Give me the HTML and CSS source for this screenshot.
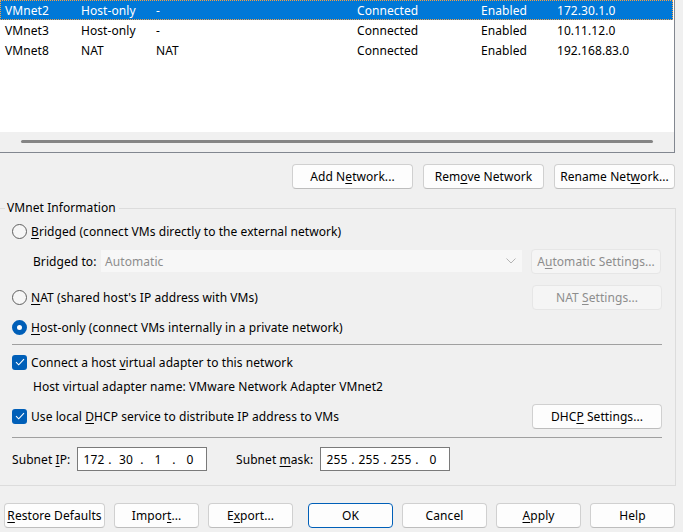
FILE: index.html
```html
<!DOCTYPE html>
<html lang="en">
<head>
    <meta charset="UTF-8">
    <meta name="viewport" content="width=device-width, initial-scale=1.0">
    <title>Virtual Network Editor</title>
    <link rel="stylesheet" href="styles.css">
</head>
<body>
    <!-- network list -->
    <div class="netlist">
        <div class="row selected">
            <span>VMnet2</span><span>Host-only</span><span>-</span><span>Connected</span><span>Enabled</span><span>172.30.1.0</span>
        </div>
        <div class="row">
            <span>VMnet3</span><span>Host-only</span><span>-</span><span>Connected</span><span>Enabled</span><span>10.11.12.0</span>
        </div>
        <div class="row">
            <span>VMnet8</span><span>NAT</span><span>NAT</span><span>Connected</span><span>Enabled</span><span>192.168.83.0</span>
        </div>
        <div class="hscroll"><div class="thumb"></div></div>
    </div>

    <div class="net-actions">
        <button class="btn">Add N<u>e</u>twork...</button>
        <button class="btn">Rem<u>o</u>ve Network</button>
        <button class="btn">Rename Net<u>w</u>ork...</button>
    </div>

    <fieldset class="info">
        <legend>VMnet Information</legend>
        <div class="info-body">
            <div class="line bridged">
                <span class="radio"></span>
                <span><u>B</u>ridged (connect VMs directly to the external network)</span>
            </div>
            <div class="line bridge-to">
                <span class="sub-label">Brid<u>g</u>ed to:</span>
                <div class="combo">
                    <span>Automatic</span>
                    <svg width="10" height="6" viewBox="0 0 10 6"><path d="M0.5 0.5 L5 5 L9.5 0.5" fill="none" stroke="#b4b4b4" stroke-width="1"/></svg>
                </div>
                <button class="btn side" disabled>A<u>u</u>tomatic Settings...</button>
            </div>
            <div class="line nat">
                <span class="radio"></span>
                <span><u>N</u>AT (shared host's IP address with VMs)</span>
                <button class="btn side push" disabled>NAT <u>S</u>ettings...</button>
            </div>
            <div class="line host">
                <span class="radio checked"></span>
                <span><u>H</u>ost-only (connect VMs internally in a private network)</span>
            </div>
            <div class="sep sep-top"></div>
            <div class="line adapter">
                <span class="check"><svg width="10" height="8" viewBox="0 0 10 8"><path d="M1 4.2 L3.7 6.8 L9 1.2" fill="none" stroke="#fff" stroke-width="1.1"/></svg></span>
                <span>Connect a host <u>v</u>irtual adapter to this network</span>
            </div>
            <div class="line adapter-name">Host virtual adapter name: VMware Network Adapter VMnet2</div>
            <div class="line dhcp">
                <span class="check"><svg width="10" height="8" viewBox="0 0 10 8"><path d="M1 4.2 L3.7 6.8 L9 1.2" fill="none" stroke="#fff" stroke-width="1.1"/></svg></span>
                <span>Use local <u>D</u>HCP service to distribute IP address to VMs</span>
                <button class="btn side push">DHC<u>P</u> Settings...</button>
            </div>
            <div class="sep sep-bottom"></div>
            <div class="line subnet">
                <span class="ip-label">Subnet <u>I</u>P:</span>
                <div class="ip">
                    <span class="oct">172</span><span class="dot">.</span><span class="oct">30</span><span class="dot">.</span><span class="oct">1</span><span class="dot">.</span><span class="oct">0</span>
                </div>
                <span class="mask-label">Subnet <u>m</u>ask:</span>
                <div class="ip">
                    <span class="oct">255</span><span class="dot">.</span><span class="oct">255</span><span class="dot">.</span><span class="oct">255</span><span class="dot">.</span><span class="oct">0</span>
                </div>
            </div>
        </div>
    </fieldset>

    <div class="dialog-buttons">
        <button class="btn restore"><u>R</u>estore Defaults</button>
        <button class="btn">Impor<u>t</u>...</button>
        <button class="btn">E<u>x</u>port...</button>
        <button class="btn ok">OK</button>
        <button class="btn">Cancel</button>
        <button class="btn"><u>A</u>pply</button>
        <button class="btn">Help</button>
    </div>
</body>
</html>
```

FILE: styles.css
```css
* {
    margin: 0;
    padding: 0;
    box-sizing: border-box;
}

body {
    background-color: #f0f0f0;
    font-family: 'Noto Sans', 'Open Sans', sans-serif;
    font-size: 12px;
    letter-spacing: 0.07px;
    color: #000;
    width: 683px;
    overflow: hidden;
}

u {
    text-decoration: underline;
    text-underline-offset: 2px;
}

/* network list */
.netlist {
    width: 676px;
    height: 154px;
    margin: -1px 0 0 -1px;
    background-color: #fff;
    border: 1px solid #828790;
    display: flex;
    flex-direction: column;
}

.row {
    height: 20px;
    padding-left: 5px;
    display: grid;
    grid-template-columns: 76px 75px 201px 124px 76px 1fr;
    align-items: center;
    white-space: nowrap;

    &.selected {
        background-color: #0078d7;
        color: #fff;
        outline: 1px dotted #f7a046;
        outline-offset: -1px;
        margin-right: 1px;
    }
}

.hscroll {
    margin-top: auto;
    height: 20px;
    background-color: #f0f0f0;
    padding: 8px 21px 0 21px;

    .thumb {
        height: 3px;
        border-radius: 2px;
        background-color: #858585;
    }
}

/* buttons */
.btn {
    height: 25px;
    font-family: inherit;
    font-size: 12px;
    letter-spacing: inherit;
    color: #000;
    background-color: #fdfdfd;
    border: 1px solid #d0d0d0;
    border-bottom-color: #bdbdbd;
    border-radius: 4px;
    white-space: nowrap;

    &:disabled {
        color: #8d8d8d;
        background-color: #f5f5f5;
        border-color: #e6e6e6;
    }
}

.net-actions {
    display: flex;
    justify-content: flex-end;
    gap: 10px;
    padding-right: 8px;
    margin-top: 11px;

    .btn {
        width: 121px;
    }
}

/* VMnet information group */
.info {
    width: 677px;
    margin: 11px 0 0 -1px;
    border: 1px solid #dcdcdc;

    legend {
        margin-left: 5px;
        padding: 0 3px 0 2px;
        line-height: 16px;
    }
}

.info-body {
    padding: 4px 13px 14px 12px;
}

.line {
    display: flex;
    align-items: center;
    white-space: nowrap;
}

.radio {
    width: 15px;
    height: 15px;
    margin-right: 4px;
    border: 1px solid #5f5f5f;
    border-radius: 50%;
    background-color: #f6f6f6;
    flex-shrink: 0;

    &.checked {
        border: 5px solid #005fb8;
        background-color: #fff;
    }
}

.check {
    width: 15px;
    height: 15px;
    margin-right: 4px;
    border-radius: 3px;
    background-color: #005fb8;
    display: flex;
    justify-content: center;
    align-items: center;
    flex-shrink: 0;
}

.bridged {
    height: 22px;
}

.bridge-to {
    height: 24px;
    margin-top: 7px;
    padding-left: 21px;

    .sub-label {
        width: 68px;
    }
}

.combo {
    width: 421px;
    height: 22px;
    padding: 0 6px 0 4px;
    background-color: #f7f7f7;
    color: #8d8d8d;
    display: flex;
    justify-content: space-between;
    align-items: center;
}

.side {
    width: 130px;
    margin-left: 9px;

    &.push {
        margin-left: auto;
    }
}

.nat {
    height: 24px;
    margin-top: 12px;
}

.host {
    height: 22px;
    margin-top: 7px;
}

.sep {
    height: 1px;
    background-color: #a0a0a0;
}

.sep-top {
    margin-top: 6px;
}

.adapter {
    height: 20px;
    margin-top: 7px;
}

.adapter-name {
    height: 20px;
    margin-top: 4px;
    padding-left: 21px;
}

.dhcp {
    height: 24px;
    margin-top: 8px;
}

.sep-bottom {
    margin-top: 9px;
}

.subnet {
    height: 24px;
    margin-top: 9px;

    .ip-label {
        width: 65px;
    }

    .mask-label {
        width: 84px;
        margin-left: 29px;
    }
}

.ip {
    width: 130px;
    height: 24px;
    padding-left: 4px;
    background-color: #fff;
    border: 1px solid #7a7a7a;
    display: flex;
    align-items: center;

    .oct {
        width: 24px;
        text-align: center;
    }

    .dot {
        width: 8px;
        text-align: center;
    }
}

/* dialog buttons */
.dialog-buttons {
    display: flex;
    gap: 9px;
    padding: 0 8px 0 4px;
    margin-top: 17px;

    .btn {
        width: 85px;
    }

    .restore {
        width: 101px;
    }

    .ok {
        margin-left: auto;
        border-color: #005fb8;
    }
}
```
